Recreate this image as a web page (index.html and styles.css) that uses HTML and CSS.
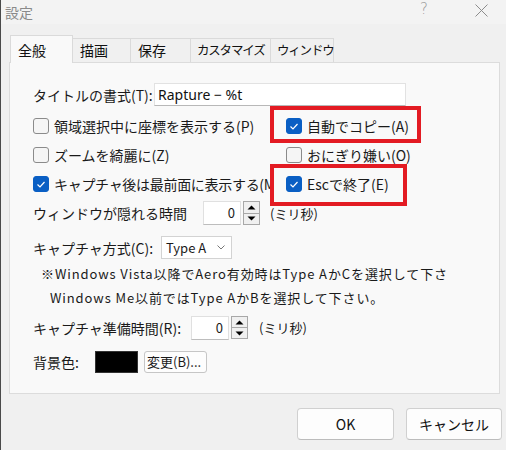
FILE: index.html
```html
<!DOCTYPE html>
<html lang="ja">
<head>
<meta charset="utf-8">
<title>設定</title>
<link rel="stylesheet" href="styles.css">
</head>
<body>
<div class="window">
  <div class="titlebar">
    <span class="title">設定</span>
    <span class="help">?</span>
    <svg class="close" width="13" height="13" viewBox="0 0 13 13"><path d="M0.5 0.5 L12.5 12.5 M12.5 0.5 L0.5 12.5" stroke="#8c8c8c" stroke-width="1" fill="none"/></svg>
  </div>
  <div class="tabs">
    <div class="tab active w1">全般</div>
    <div class="tab w2">描画</div>
    <div class="tab w3">保存</div>
    <div class="tab w4 narrow">カスタマイズ</div>
    <div class="tab w5 narrow">ウィンドウ</div>
  </div>
  <div class="panel">
    <div class="row r1">
      <span class="label l1">タイトルの書式(T):</span>
      <div class="textbox">Rapture − %t</div>
    </div>
    <div class="row r2">
      <div class="cell left"><span class="cb"></span><span>領域選択中に座標を表示する(P)</span></div>
      <div class="cell"><span class="cb on"><svg width="16" height="16" viewBox="0 0 16 16"><path d="M4.5 8.5 L7 11 L11.5 6" stroke="#fff" stroke-width="1.2" fill="none"/></svg></span><span>自動でコピー(A)</span></div>
    </div>
    <div class="row r3">
      <div class="cell left"><span class="cb"></span><span>ズームを綺麗に(Z)</span></div>
      <div class="cell"><span class="cb"></span><span>おにぎり嫌い(O)</span></div>
    </div>
    <div class="row r4">
      <div class="cell left clip"><span class="cb on"><svg width="16" height="16" viewBox="0 0 16 16"><path d="M4.5 8.5 L7 11 L11.5 6" stroke="#fff" stroke-width="1.2" fill="none"/></svg></span><span class="tight">キャプチャ後は最前面に表示する(M)</span></div>
      <div class="cell"><span class="cb on"><svg width="16" height="16" viewBox="0 0 16 16"><path d="M4.5 8.5 L7 11 L11.5 6" stroke="#fff" stroke-width="1.2" fill="none"/></svg></span><span>Escで終了(E)</span></div>
    </div>
    <div class="row r5">
      <span class="label l5">ウィンドウが隠れる時間</span>
      <div class="spin"><div class="spinval">0</div><div class="spinbtns"><div class="sb"><svg width="9" height="5" viewBox="0 0 9 5"><path d="M0.5 4.5 L4.5 0.5 L8.5 4.5 Z" fill="#000"/></svg></div><div class="sb"><svg width="9" height="5" viewBox="0 0 9 5"><path d="M0.5 0.5 L4.5 4.5 L8.5 0.5 Z" fill="#000"/></svg></div></div></div>
      <span class="unit u1">(ミリ秒)</span>
    </div>
    <div class="row r6">
      <span class="label l6">キャプチャ方式(C):</span>
      <div class="combo"><span class="ctext">Type A</span><svg class="chev" width="8" height="5" viewBox="0 0 8 5"><path d="M0.5 0.5 L4 4 L7.5 0.5" stroke="#777" stroke-width="1" fill="none"/></svg></div>
    </div>
    <div class="row r7 note">※Windows Vista以降でAero有効時はType AかCを選択して下さ</div>
    <div class="row r8 note n2">Windows Me以前ではType AかBを選択して下さい。</div>
    <div class="row r9">
      <span class="label l9">キャプチャ準備時間(R):</span>
      <div class="spin"><div class="spinval">0</div><div class="spinbtns"><div class="sb"><svg width="9" height="5" viewBox="0 0 9 5"><path d="M0.5 4.5 L4.5 0.5 L8.5 4.5 Z" fill="#000"/></svg></div><div class="sb"><svg width="9" height="5" viewBox="0 0 9 5"><path d="M0.5 0.5 L4.5 4.5 L8.5 0.5 Z" fill="#000"/></svg></div></div></div>
      <span class="unit u2">(ミリ秒)</span>
    </div>
    <div class="row r10">
      <span class="label l10">背景色:</span>
      <div class="swatch"></div>
      <div class="smallbtn">変更(B)...</div>
    </div>
  </div>
  <div class="buttons">
    <div class="btn ok">OK</div>
    <div class="btn cancel">キャンセル</div>
  </div>
  <div class="mark m1"></div>
  <div class="mark m2"></div>
</div>
</body>
</html>
```
FILE: styles.css
```css
* { box-sizing: border-box; }
html, body { margin: 0; padding: 0; }
body {
  width: 506px;
  height: 450px;
  overflow: hidden;
  background: #f0f0f0;
  font-family: "Noto Sans CJK JP", "Noto Sans", sans-serif;
  font-size: 14px;
  color: #1a1a1a;
}
.window {
  position: relative;
  width: 506px;
  height: 450px;
  border-left: 1px solid #4a4a4a;
}
.titlebar {
  height: 24px;
  background: #f3f3f3;
  display: flex;
  align-items: center;
  position: relative;
}
.title {
  margin-left: 4px;
  color: #8a8a8a;
  font-size: 14px;
  line-height: 1;
}
.help {
  position: absolute;
  left: 419px;
  top: 2px;
  color: #9a9a9a;
  font-size: 15px;
  line-height: 1;
  font-family: "DejaVu Sans", sans-serif;
  font-weight: 300;
}
.close {
  position: absolute;
  left: 474px;
  top: 4px;
}
.tabs {
  margin-top: 11px;
  padding-left: 9px;
  height: 27px;
  display: flex;
  align-items: flex-end;
  position: relative;
  z-index: 2;
}
.tab {
  height: 24px;
  border: 1px solid #dadada;
  border-bottom: none;
  margin-left: -1px;
  padding-left: 7px;
  line-height: 22px;
  font-size: 14px;
  color: #111;
  white-space: nowrap;
}
.tab.narrow { font-size: 12.5px; letter-spacing: -1.2px; padding-left: 6px; }
.tab.active {
  height: 28px;
  margin-bottom: -1px;
  margin-left: 0;
  background: #f9f9f9;
  line-height: 28px;
  position: relative;
  z-index: 3;
}
.w1 { width: 63px; }
.w2 { width: 59px; }
.w3 { width: 61px; }
.w4 { width: 81px; }
.w5 { width: 64px; }
.panel {
  margin-left: 8px;
  width: 491px;
  height: 332px;
  background: #f9f9f9;
  border: 1px solid #dcdcdc;
  padding: 20px 0 0 23px;
  display: flex;
  flex-direction: column;
}
.row {
  display: flex;
  align-items: center;
  flex-shrink: 0;
}
.r1 { height: 23px; }
.r2 { margin-top: 11px; height: 18px; }
.r3 { margin-top: 11px; height: 18px; }
.r4 { margin-top: 11px; height: 18px; }
.r5 { margin-top: 8px; height: 24px; }
.r6 { margin-top: 11px; height: 23px; }
.r7 { margin-top: 5px; height: 18px; }
.r8 { margin-top: 6px; height: 18px; }
.r9 { margin-top: 10px; height: 23px; }
.r10 { margin-top: 12px; height: 22px; }
.label { white-space: nowrap; flex-shrink: 0; }
.l1 { width: 121px; }
.l5 { width: 170px; }
.l6 { width: 128px; }
.l9 { width: 158px; }
.l10 { width: 62px; }
.textbox {
  width: 252px;
  height: 23px;
  background: #fff;
  border: 1px solid #e2e2e2;
  border-bottom-color: #b8b8b8;
  padding-left: 3px;
  line-height: 21px;
  font-family: "Noto Sans", sans-serif;
  font-size: 14px;
  color: #111;
}
.cell {
  display: flex;
  align-items: center;
  white-space: nowrap;
}
.cell.left { width: 253px; flex-shrink: 0; }
.cell.clip { width: 240px; overflow: hidden; margin-right: 13px; }
.tight { letter-spacing: -0.3px; }
.cb {
  width: 16px;
  height: 16px;
  border: 1px solid #8b8b8b;
  border-radius: 3px;
  background: #f5f5f5;
  margin-right: 5px;
  flex-shrink: 0;
  display: flex;
}
.cb.on {
  background: #0a5fc4;
  border-color: #0a5fc4;
}
.cb svg { margin: -1px; }
.spin {
  display: flex;
  width: 57px;
  height: 24px;
}
.spinval {
  width: 38px;
  height: 24px;
  background: #fff;
  border: 1px solid #e0e0e0;
  border-bottom-color: #bdbdbd;
  text-align: right;
  padding-right: 5px;
  line-height: 22px;
  font-size: 13px;
}
.spinbtns {
  width: 17px;
  margin-left: 2px;
  display: flex;
  flex-direction: column;
  border: 1px solid #a8a8a8;
  background: #f0f0f0;
}
.sb {
  flex: 1;
  display: flex;
  align-items: center;
  justify-content: center;
}
.sb + .sb { border-top: 1px solid #a8a8a8; }
.unit { margin-left: 10px; font-size: 13px; }
.u2 { margin-left: 11px; }
.r9 .spin { height: 23px; }
.combo {
  width: 71px;
  height: 23px;
  background: #fff;
  border: 1px solid #d3d3d3;
  display: flex;
  align-items: center;
  padding-left: 4px;
  font-size: 13px;
}
.ctext { flex: 1; }
.chev { margin-right: 6px; }
.note {
  font-size: 13px;
  padding-left: 8px;
  letter-spacing: 0.9px;
  white-space: nowrap;
}
.n2 { padding-left: 17px; }
.swatch {
  width: 43px;
  height: 22px;
  background: #000;
  border: 1px solid #333;
}
.smallbtn {
  margin-left: 6px;
  width: 63px;
  height: 22px;
  border: 1px solid #c6c6c6;
  border-radius: 3px;
  background: #fdfdfd;
  font-size: 13px;
  line-height: 20px;
  padding-left: 2px;
  white-space: nowrap;
}
.buttons {
  margin-top: 14px;
  display: flex;
  justify-content: flex-end;
  padding-right: 4px;
  gap: 12px;
}
.btn {
  width: 97px;
  height: 32px;
  border: 1px solid #d0d0d0;
  border-bottom-color: #bcbcbc;
  border-radius: 4px;
  background: #fdfdfd;
  display: flex;
  align-items: center;
  justify-content: center;
  font-size: 14px;
  color: #111;
}
.cancel { width: 96px; }
.mark {
  position: absolute;
  border: 4px solid #e31b23;
  z-index: 5;
}
.m1 { left: 269px; top: 106px; width: 151px; height: 37px; }
.m2 { left: 269px; top: 164px; width: 137px; height: 42px; }
```
